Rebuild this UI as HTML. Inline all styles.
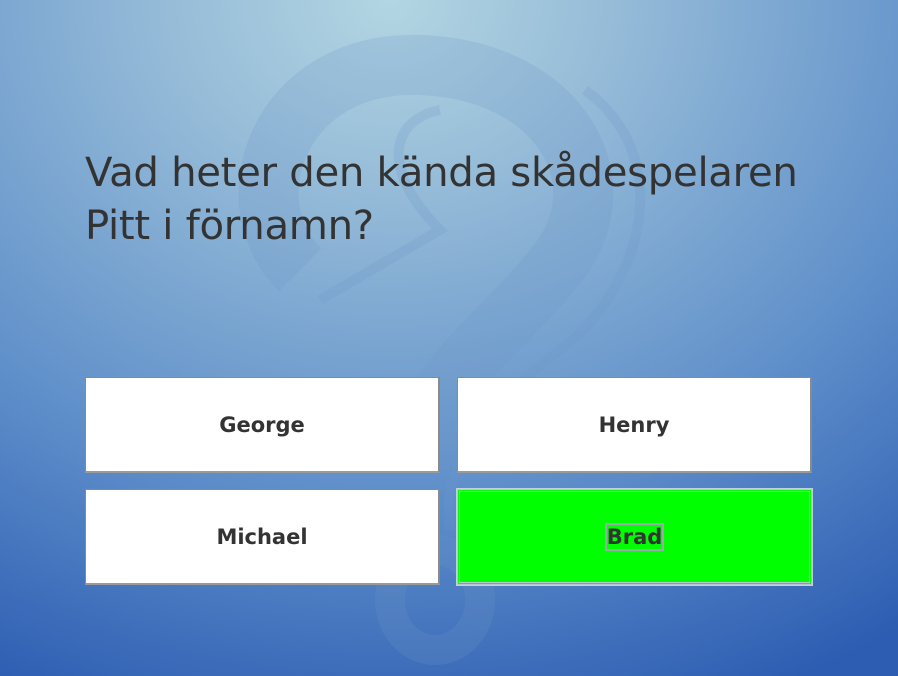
<!DOCTYPE html>
<html><head><meta charset="utf-8"><style>
html,body{margin:0;padding:0}
body{width:898px;height:676px;overflow:hidden;position:relative;
background:radial-gradient(ellipse 900px 760px at 390px 0px,#b3d6e2 0%,#8fb6d6 30%,#5f8fca 65%,#2d5db2 100%);
font-family:"DejaVu Sans","Liberation Sans",sans-serif;}
svg.wm{position:absolute;left:0;top:0}
.q{position:absolute;left:85px;top:147px;font-size:40.2px;line-height:53px;color:#333;letter-spacing:-0.3px}
.b{position:absolute;width:355px;height:96px;background:#fff;border:1px solid #8a8a8a;border-right:2px solid #8a8a8a;border-bottom:2px solid #9a9a9a;box-sizing:border-box;
display:flex;align-items:center;justify-content:center;font-weight:bold;font-size:21px;color:#333}
.g{background:#00ff00;border:3px double #b8c8d0;box-shadow:0 0 0 1px #c0d0e0}
.g span{border:2px solid #9aa}
</style></head><body>
<svg class="wm" width="898" height="676">
<g fill="none" stroke="#6f95c8" stroke-opacity="0.22">
<path d="M300 270 C230 200 280 60 420 65 C560 70 620 180 560 260 C500 340 420 380 420 470" stroke-width="60"/>
<path d="M585 90 C680 160 640 290 560 350 C480 410 440 470 450 530" stroke-width="10"/>
<path d="M320 300 L440 230 C380 170 390 120 440 110" stroke-width="10"/>
<ellipse cx="435" cy="600" rx="45" ry="50" stroke-width="30"/>
</g></svg>
<div class="q">Vad heter den kända skådespelaren<br>Pitt i förnamn?</div>
<div class="b" style="left:85px;top:377px">George</div>
<div class="b" style="left:457px;top:377px">Henry</div>
<div class="b" style="left:85px;top:489px">Michael</div>
<div class="b g" style="left:457px;top:489px"><span>Brad</span></div>
</body></html>
